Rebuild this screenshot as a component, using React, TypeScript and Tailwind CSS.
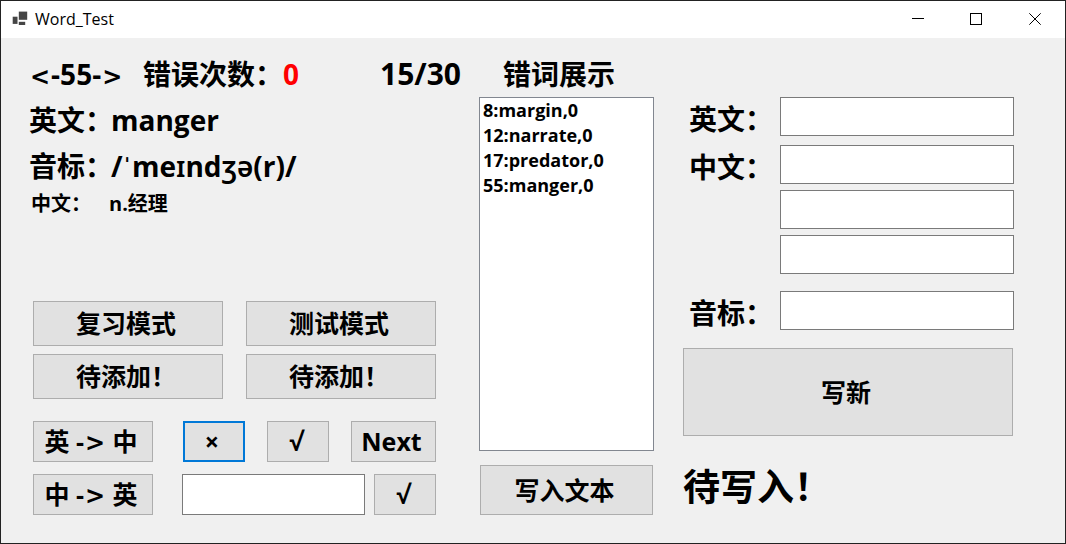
import React, { useState } from 'react';

const wrongWords = ['8:margin,0', '12:narrate,0', '17:predator,0', '55:manger,0'];

const AppIcon: React.FC = () => (
  <svg width="16" height="16" viewBox="0 0 16 16" fill="#454545" aria-hidden="true">
    <rect x="6.8" y="0.6" width="8.4" height="8.2" />
    <rect x="0.7" y="5.7" width="4.8" height="7.2" />
    <rect x="6.8" y="10.8" width="6.4" height="3.2" />
  </svg>
);

interface ButtonProps {
  children: React.ReactNode;
  className?: string;
  focused?: boolean;
  label?: string;
}

const Button: React.FC<ButtonProps> = ({ children, className = '', focused = false, label }) => (
  <button
    type="button"
    aria-label={label}
    className={`flex items-center justify-center whitespace-nowrap bg-[#e1e1e1] pr-1 text-[25px] leading-none ${
      focused ? 'border-2 border-[#0078d7]' : 'border border-[#adadad]'
    } ${className}`}
  >
    {children}
  </button>
);

// Wide angle sign used in the arrows
const Angle: React.FC<{ children: string }> = ({ children }) => (
  <span className="px-px font-['DejaVu_Sans',sans-serif] text-2xl leading-none">{children}</span>
);

const inputClass = 'min-w-0 flex-1 border border-[#7a7a7a] bg-white px-1 text-xl outline-none';
const labelClass = 'flex h-[39px] w-[97px] items-center pt-1 pl-[6px] text-[28px] whitespace-nowrap';
const ipaClass = "font-['Noto_Sans',sans-serif] font-semibold";

const App: React.FC = () => {
  const [english, setEnglish] = useState('');
  const [meanings, setMeanings] = useState(['', '', '']);
  const [phonetic, setPhonetic] = useState('');
  const [answer, setAnswer] = useState('');

  const handleMeaningChange = (index: number, value: string) => {
    setMeanings(meanings.map((m, i) => (i === index ? value : m)));
  };

  return (
    <div className="flex min-h-screen flex-col border border-[#222222] bg-[#f0f0f0] font-['Open_Sans','Noto_Sans_CJK_SC',sans-serif] font-bold text-black">
      {/* Title bar */}
      <header className="flex h-[37px] items-center bg-white pr-px pb-px font-normal">
        <div className="flex flex-1 items-center gap-[7px] pl-[11px]">
          <AppIcon />
          <h1 className="text-base leading-5">Word_Test</h1>
        </div>
        <button type="button" aria-label="Minimize" className="flex h-full w-[59px] items-center justify-center">
          <svg width="12" height="12" viewBox="0 0 12 12" stroke="#000" fill="none" shapeRendering="crispEdges">
            <path d="M0 5.5H12" />
          </svg>
        </button>
        <button type="button" aria-label="Maximize" className="flex h-full w-[58px] items-center justify-center">
          <svg width="12" height="12" viewBox="0 0 12 12" stroke="#000" fill="none" shapeRendering="crispEdges">
            <path d="M0.5 0.5H11.5V11.5H0.5Z" />
          </svg>
        </button>
        <button type="button" aria-label="Close" className="flex h-full w-[59px] items-center justify-center">
          <svg width="12" height="12" viewBox="0 0 12 12" stroke="#000" fill="none">
            <path d="M0.3 0.3L11.7 11.7M11.7 0.3L0.3 11.7" />
          </svg>
        </button>
      </header>

      <main className="grid flex-1 grid-cols-[minmax(0,450fr)_minmax(0,204fr)_minmax(0,331fr)] pt-3 pr-[51px] pb-7 pl-7">
        {/* Current word and test controls */}
        <section className="flex flex-col pr-[18px] whitespace-nowrap">
          <div className="flex h-[47px] items-center text-[28px]">
            <span className="w-[114px]">
              <Angle>&lt;</Angle>-55-<Angle>&gt;</Angle>
            </span>
            <span>错误次数：</span>
            <span className="text-[#ff0000]">0</span>
            <span className="ml-auto text-[30px]">15/30</span>
          </div>
          <p className="flex h-[45px] items-center text-[28px]">
            <span className="w-[82px]">英文：</span>
            <span>manger</span>
          </p>
          <p className="flex h-12 items-center text-[28px]">
            <span className="w-[82px]">音标：</span>
            <span>
              /ˈme<span className={ipaClass}>ɪ</span>nd<span className={ipaClass}>ʒə</span>(r)/
            </span>
          </p>
          <p className="flex h-7 items-center pl-[2px] text-xl">
            <span className="w-[78px]">中文：</span>
            <span>n.经理</span>
          </p>

          <div className="mt-auto flex flex-col pr-[25px] pl-1">
            <div className="grid grid-cols-2 gap-x-[23px] gap-y-2">
              <Button className="h-[45px]">复习模式</Button>
              <Button className="h-[45px]">测试模式</Button>
              <Button className="h-[45px]">待添加！</Button>
              <Button className="h-[45px]">待添加！</Button>
            </div>
            <div className="mt-[22px] flex h-[41px]">
              <Button className="w-[120px]">
                <span>英 -<Angle>&gt;</Angle> 中</span>
              </Button>
              <div className="ml-[30px] flex flex-1 justify-between">
                <Button className="w-[62px]" focused label="错误">×</Button>
                <Button className="w-[62px]" label="正确">√</Button>
                <Button className="w-[85px]">Next</Button>
              </div>
            </div>
            <div className="mt-3 flex h-[41px]">
              <Button className="w-[120px]">
                <span>中 -<Angle>&gt;</Angle> 英</span>
              </Button>
              <input
                type="text"
                aria-label="答案"
                value={answer}
                onChange={(e) => setAnswer(e.target.value)}
                className={`mr-[9px] ml-[29px] ${inputClass}`}
              />
              <Button className="w-[62px]" label="提交">√</Button>
            </div>
          </div>
        </section>

        {/* Wrong word list */}
        <section className="flex flex-col pr-[29px]">
          <label htmlFor="wrong-words" className="flex h-[47px] items-center pl-6 text-[28px] whitespace-nowrap">
            错词展示
          </label>
          <select
            id="wrong-words"
            size={4}
            className="w-full flex-1 overflow-hidden border border-[#828790] bg-white text-lg outline-none"
          >
            {wrongWords.map((word) => (
              <option key={word} className="h-[25px] px-[3px] py-0 leading-[25px] font-bold">
                {word}
              </option>
            ))}
          </select>
          <Button className="mx-px mt-[14px] h-[50px]">写入文本</Button>
        </section>

        {/* New word form */}
        <form className="flex flex-col pt-[47px]" onSubmit={(e) => e.preventDefault()}>
          <div className="flex h-[39px]">
            <label htmlFor="english" className={labelClass}>
              英文：
            </label>
            <input id="english" type="text" value={english} onChange={(e) => setEnglish(e.target.value)} className={inputClass} />
          </div>
          <div className="mt-[9px] flex">
            <label htmlFor="meaning-0" className={labelClass}>
              中文：
            </label>
            <div className="flex min-w-0 flex-1 flex-col gap-[6px]">
              {meanings.map((meaning, i) => (
                <div key={i} className="flex h-[39px]">
                  <input
                    id={`meaning-${i}`}
                    type="text"
                    aria-label={`中文 ${i + 1}`}
                    value={meaning}
                    onChange={(e) => handleMeaningChange(i, e.target.value)}
                    className={inputClass}
                  />
                </div>
              ))}
            </div>
          </div>
          <div className="mt-[17px] flex h-[39px]">
            <label htmlFor="phonetic" className={labelClass}>
              音标：
            </label>
            <input id="phonetic" type="text" value={phonetic} onChange={(e) => setPhonetic(e.target.value)} className={inputClass} />
          </div>
          <Button className="mt-[18px] mr-px h-[88px]">写新</Button>
          <p className="mt-6 text-[37px] leading-[54px] whitespace-nowrap">待写入！</p>
        </form>
      </main>
    </div>
  );
};

export default App;
